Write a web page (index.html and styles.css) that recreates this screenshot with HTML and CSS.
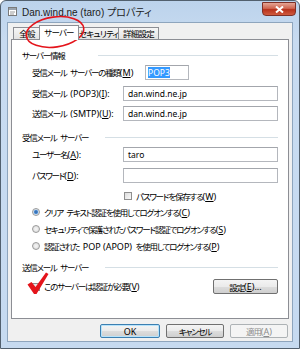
FILE: index.html
```html
<!DOCTYPE html>
<html lang="ja">
<head>
    <meta charset="UTF-8">
    <title>Dan.wind.ne (taro) プロパティ</title>
    <link rel="stylesheet" href="styles.css">
</head>
<body>

    <div class="window">
        <div class="titlebar">
            <svg class="app-icon" width="9" height="9" viewBox="0 0 9 9">
                <rect x="0.5" y="0.5" width="8" height="8" fill="#fff" stroke="#7a7a7a"/>
                <rect x="1" y="1" width="7" height="2" fill="#9aa3ad"/>
                <path d="M2 5h5M2 7h4" stroke="#9a9a9a"/>
            </svg>
            <span class="title">Dan.wind.ne (taro) プロパティ</span>
            <div class="close">
                <svg width="9" height="7" viewBox="0 0 9 7">
                    <path d="M1 0.5 L8 6.5 M8 0.5 L1 6.5" stroke="#fff" stroke-width="2"/>
                </svg>
            </div>
        </div>

        <div class="client">
            <div class="tabs">
                <div class="tab">全般</div>
                <div class="tab active">サーバー</div>
                <div class="tab">セキュリティ</div>
                <div class="tab">詳細設定</div>
            </div>

            <div class="panel">
                <div class="group-title first">サーバー情報</div>

                <div class="field row-type">
                    <span class="label wide">受信メール サーバーの種類<span class="key">(<u>M</u>)</span></span>
                    <div class="textbox small"><span class="selected">POP3</span></div>
                </div>
                <div class="field row-in">
                    <span class="label">受信メール <span class="key">(POP3)(<u>I</u>):</span></span>
                    <div class="textbox">dan.wind.ne.jp</div>
                </div>
                <div class="field row-out">
                    <span class="label">送信メール <span class="key">(SMTP)(<u>U</u>):</span></span>
                    <div class="textbox">dan.wind.ne.jp</div>
                </div>

                <div class="group-title second">受信メール サーバー</div>

                <div class="field row-user">
                    <span class="label">ユーザー名<span class="key">(<u>A</u>):</span></span>
                    <div class="textbox">taro</div>
                </div>
                <div class="field row-pass">
                    <span class="label">パスワード<span class="key">(<u>D</u>):</span></span>
                    <div class="textbox"></div>
                </div>

                <div class="option save">
                    <span class="checkbox"></span>
                    <span>パスワードを保存する<span class="key">(<u>W</u>)</span></span>
                </div>

                <div class="option radio-row first-radio">
                    <span class="radio checked"></span>
                    <span>クリア テキスト認証を使用してログオンする<span class="key">(<u>C</u>)</span></span>
                </div>
                <div class="option radio-row">
                    <span class="radio"></span>
                    <span>セキュリティで保護されたパスワード認証でログオンする<span class="key">(<u>S</u>)</span></span>
                </div>
                <div class="option radio-row">
                    <span class="radio"></span>
                    <span>認証された <span class="key">POP (APOP)</span> を使用してログオンする<span class="key">(<u>P</u>)</span></span>
                </div>

                <div class="group-title third">送信メール サーバー</div>

                <div class="auth-row">
                    <div class="option">
                        <span class="checkbox"></span>
                        <span>このサーバーは認証が必要<span class="key">(<u>V</u>)</span></span>
                    </div>
                    <div class="button settings">設定<span class="key">(<u>E</u>)...</span></div>
                </div>
            </div>

            <div class="buttons">
                <div class="button default"><span class="key">OK</span></div>
                <div class="button">キャンセル</div>
                <div class="button disabled">適用<span class="key">(<u>A</u>)</span></div>
            </div>
        </div>

        <!-- annotations drawn over the dialog -->
        <svg class="mark-ellipse" width="64" height="36" viewBox="0 0 64 36">
            <ellipse cx="32" cy="18" rx="29" ry="15" fill="none" stroke="#e4141b" stroke-width="1.6" transform="rotate(-8 32 18)"/>
        </svg>
        <svg class="mark-check" width="22" height="23" viewBox="0 0 22 23">
            <path d="M0.5 12.5 L4.5 10 L8.5 15 L19 0.5 L21.5 2 L9.5 22 L7 22 Z" fill="#e4141b"/>
        </svg>
    </div>

</body>
</html>
```

FILE: styles.css
```css
* {
    margin: 0;
    padding: 0;
    box-sizing: border-box;
}

body {
    font-family: "Noto Sans", "Noto Sans CJK JP", sans-serif;
    font-size: 8.5px;
    font-feature-settings: "palt";
    color: #000;
    background-color: #fff;
}

u {
    text-decoration: underline;
}

/* latin runs and accelerator keys keep normal spacing */
.key {
    font-size: 9px;
    letter-spacing: 0;
    word-spacing: 0;
}

.window {
    position: relative;
    width: 300px;
    height: 349px;
    display: flex;
    flex-direction: column;
    padding: 0 6px 6px 6px;
    background: linear-gradient(#bcd3ec, #c8dbf0 40px, #c6daf0);
    border: 1px solid #52606e;
    border-radius: 6px 6px 0 0;
}

.titlebar {
    height: 21px;
    display: flex;
    align-items: center;
    padding-left: 1px;
}

.app-icon {
    margin-right: 5px;
}

.title {
    font-family: "Liberation Sans", "Noto Sans CJK JP", sans-serif;
    font-size: 10px;
    color: #1b1b1b;
}

.close {
    margin-left: auto;
    margin-right: -3px;
    align-self: flex-start;
    margin-top: 1px;
    width: 34px;
    height: 14px;
    display: flex;
    align-items: center;
    justify-content: center;
    background: linear-gradient(#e5a595, #cf6550 45%, #b8321c 55%, #cf5a3e);
    border: 1px solid #7e3027;
    border-radius: 0 0 4px 4px;
}

.client {
    flex: 1;
    display: flex;
    flex-direction: column;
    padding: 2px 3px 3px 3px;
    background-color: #f0f0f0;
    border: 1px solid #8ea5bd;
    letter-spacing: -1.2px;
    word-spacing: 2.5px;
}

/* tabs */

.tabs {
    height: 14px;
    display: flex;
    align-items: flex-end;
    margin-left: 2px;
    letter-spacing: -0.8px;
    white-space: nowrap;
}

.tab {
    position: relative;
    height: 12px;
    line-height: 11px;
    text-align: center;
    background: linear-gradient(#f6f6f6, #e3e3e3);
    border: 1px solid #8c8e94;
    border-bottom: none;
    margin-right: -1px;
}

.tab:nth-child(1) { width: 28px; }
.tab:nth-child(3) { width: 41px; }
.tab:nth-child(4) { width: 41px; }

.tab.active {
    z-index: 1;
    width: 40px;
    height: 15px;
    line-height: 13px;
    margin: 0 -1px -1px -1px;
    background: #fff;
}

.panel {
    flex: 1;
    display: flex;
    flex-direction: column;
    background-color: #fff;
    border: 1px solid #8c8e94;
}

/* group headings with a rule */

.group-title {
    height: 12px;
    display: flex;
    align-items: center;
    padding: 0 10px;
    white-space: nowrap;
}

.group-title::after {
    content: "";
    flex: 1;
    border-top: 1px solid #d5dfe5;
    margin-left: 17px;
}

.group-title.first {
    margin-top: 9px;
}

.group-title.first::after {
    margin-left: 33px;
}

.group-title.second {
    margin-top: 10px;
}

.group-title.third {
    margin-top: 9px;
}

/* label + textbox rows */

.field {
    height: 15px;
    display: flex;
    align-items: center;
    padding-left: 20px;
}

.label {
    width: 91px;
    white-space: nowrap;
}

.label.wide {
    width: 113px;
}

.row-type { margin-top: 4px; }
.row-in { margin-top: 6px; }
.row-out { margin-top: 5px; }
.row-user { margin-top: 4px; }
.row-pass { margin-top: 6px; }

.textbox {
    width: 155px;
    height: 15px;
    padding-left: 4px;
    line-height: 13px;
    font-size: 8.5px;
    letter-spacing: 0;
    background-color: #fff;
    border: 1px solid #b4b7bd;
    border-top-color: #a3a6ac;
}

.textbox.small {
    width: 44px;
    padding-left: 2px;
}

.selected {
    background-color: #3399ff;
    color: #fff;
}

/* checkboxes and radios */

.option {
    display: flex;
    align-items: center;
    gap: 4px;
    height: 12px;
    white-space: nowrap;
}

.option.save {
    margin-top: 7px;
    padding-left: 112px;
}

.radio-row {
    margin-top: 5px;
    padding-left: 20px;
}

.radio-row.first-radio {
    margin-top: 4px;
}

.checkbox {
    width: 8px;
    height: 8px;
    border: 1px solid #8f8f8f;
    background: linear-gradient(135deg, #dcdcdc, #fafafa);
}

.radio {
    width: 8px;
    height: 8px;
    border-radius: 50%;
    border: 1px solid #9a9a9a;
    background: radial-gradient(#f6f6f6, #d8d8d8);
}

.radio.checked {
    background: radial-gradient(#2f5f9c 0, #4b8bd2 1.6px, #d8e4f0 2.6px, #e8e8e8);
}

.auth-row {
    display: flex;
    align-items: center;
    justify-content: space-between;
    margin-top: 6px;
    padding: 0 10px 0 20px;
}

/* buttons */

.button {
    height: 15px;
    display: flex;
    align-items: center;
    justify-content: center;
    background: linear-gradient(#f4f4f4, #ebebeb 50%, #dddddd 51%, #cfcfcf);
    border: 1px solid #707070;
    border-radius: 2px;
}

.settings {
    width: 65px;
}

.buttons {
    display: flex;
    justify-content: flex-end;
    gap: 6px;
    margin-top: 5px;
    margin-right: 1px;
}

.buttons .button {
    width: 58px;
    height: 14px;
}

.buttons .default {
    width: 60px;
    border-color: #3c7fb1;
    box-shadow: inset 0 0 0 1px #b6e3fb;
}

.buttons .disabled {
    color: #8d8d8d;
    background: #f4f4f4;
    border-color: #adb2b5;
}

/* annotations */

.mark-ellipse {
    position: absolute;
    left: 22px;
    top: 13px;
}

.mark-check {
    position: absolute;
    left: 26px;
    top: 271px;
}
```
